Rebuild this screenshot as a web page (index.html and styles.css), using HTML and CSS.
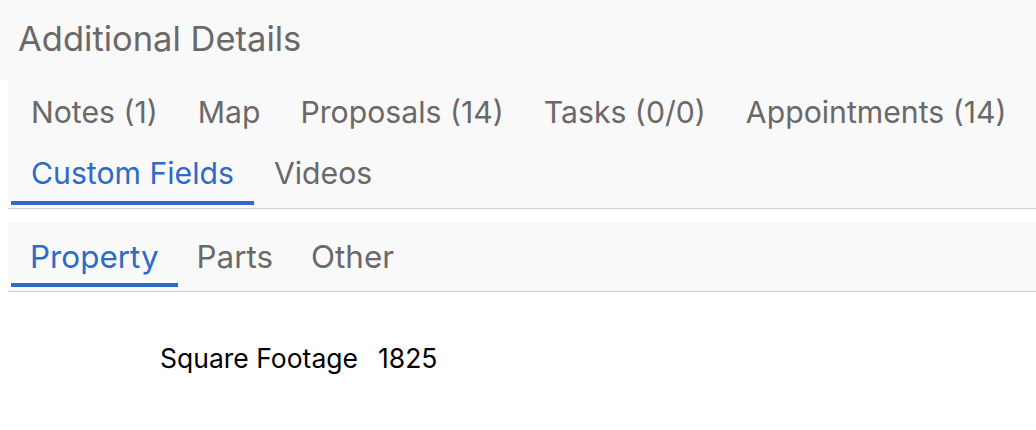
FILE: index.html
```html
<!DOCTYPE html>
<html lang="en">
<head>
<meta charset="utf-8">
<title>Additional Details</title>
<link rel="stylesheet" href="styles.css">
</head>
<body>
<div class="page">
  <header class="section-title">Additional Details</header>
  <div class="content">
    <nav class="tabs main-tabs">
      <a class="tab">Notes (1)</a>
      <a class="tab">Map</a>
      <a class="tab">Proposals (14)</a>
      <a class="tab">Tasks (0/0)</a>
      <a class="tab">Appointments (14)</a>
      <a class="tab active">Custom Fields</a>
      <a class="tab">Videos</a>
    </nav>
    <nav class="tabs sub-tabs">
      <a class="tab active">Property</a>
      <a class="tab">Parts</a>
      <a class="tab">Other</a>
    </nav>
    <div class="fields">
      <div class="field">
        <span class="label">Square Footage</span>
        <span class="value">1825</span>
      </div>
    </div>
  </div>
</div>
</body>
</html>
```

FILE: styles.css
```css
html, body {
  margin: 0;
  padding: 0;
  background: #ffffff;
}

body {
  font-family: Inter, "Liberation Sans", sans-serif;
  color: #6b6868;
}

.section-title {
  display: block;
  box-sizing: border-box;
  height: 80px;
  padding: 19px 0 0 18px;
  background: #f9f9f9;
  font-size: 34.5px;
  line-height: 40px;
  font-weight: 400;
  color: #6b6868;
}

.content {
  margin-left: 8px;
}

.tabs {
  display: flex;
  flex-wrap: wrap;
  padding: 3px 0 3px 3px;
  background: #f9f9f9;
  border-bottom: 1px solid #cfcfcf;
}

.sub-tabs {
  margin-top: 14px;
  padding-bottom: 4px;
}

.tab {
  display: block;
  padding: 13px 20px 11px;
  font-size: 30.2px;
  line-height: 33px;
  color: #6b6868;
  border-bottom: 4px solid transparent;
  cursor: pointer;
  white-space: nowrap;
}

.sub-tabs .tab {
  padding: 15px 19px 9px;
  font-size: 31.4px;
}

.tab.active {
  color: #2d6ac9;
  border-bottom-color: #2d6ac9;
}

.fields {
  padding: 50px 0 0 152px;
}

.field {
  display: flex;
  gap: 20px;
  font-size: 26.5px;
  line-height: 32px;
  color: #000000;
}
```
